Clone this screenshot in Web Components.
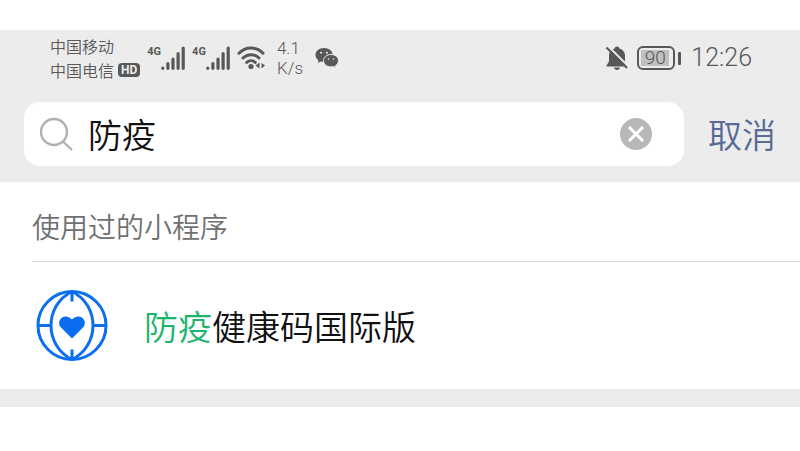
<!DOCTYPE html>
<html lang="zh-CN">
<head>
<meta charset="UTF-8">
<meta name="viewport" content="width=device-width, initial-scale=1">
<title>搜索</title>
<style>
    body {
        margin: 0;
        background: #fff;
        color: #111;
        font-family: "Noto Sans CJK SC", sans-serif;
        font-weight: 350;
    }
</style>
</head>
<body>
<search-page>
    <status-bar slot="status" speed="4.1" unit="K/s" battery="90" time="12:26">
        <span slot="carrier">中国移动</span>
        <span slot="carrier-hd">中国电信</span>
    </status-bar>
    <search-bar slot="search" value="防疫">取消</search-bar>
    <result-section>
        <span slot="title">使用过的小程序</span>
        <mini-program><mark-text>防疫</mark-text>健康码国际版</mini-program>
    </result-section>
</search-page>

<script>
class SearchPage extends HTMLElement {

    constructor() {
        super()
        this.shadow = this.attachShadow({ mode: 'open' })
    }

    connectedCallback() {
        this.render()
    }

    render() {
        this.shadow.innerHTML =
      /*html*/`
      <style>
        :host {
            display: block;
            padding-top: 30px;
        }

        header {
            background: #ececec;
            padding-bottom: 16px;
        }

        footer {
            height: 18px;
            background: #ebebeb;
        }
      </style>

      <header>
          <slot name="status"></slot>
          <slot name="search"></slot>
      </header>
      <main><slot></slot></main>
      <footer></footer>
      `
    }
}

class StatusBar extends HTMLElement {

    constructor() {
        super()
        this.shadow = this.attachShadow({ mode: 'open' })
    }

    connectedCallback() {
        this.render()
    }

    render() {
        this.shadow.innerHTML =
      /*html*/`
      <style>
        :host {
            display: flex;
            justify-content: space-between;
            align-items: center;
            height: 56px;
            padding: 0 48px 0 50px;
            margin-bottom: 16px;
            color: #585858;
        }

        .group {
            display: flex;
            align-items: center;
            gap: 7px;
        }

        .carriers {
            font-size: 16px;
            line-height: 24px;
        }

        .line {
            display: flex;
            align-items: center;
            gap: 4px;
        }

        .hd {
            padding: 0 3px;
            border-radius: 4px;
            background: #585858;
            color: #ececec;
            font: bold 12px/14px Roboto, sans-serif;
        }

        .speed {
            margin-left: 5px;
            font: 350 17px/20px Roboto, sans-serif;
        }

        .wechat {
            margin-left: 5px;
        }

        .battery {
            display: flex;
            align-items: center;
            gap: 3px;
        }

        .cell {
            box-sizing: border-box;
            width: 38px;
            padding: 2px;
            border: 2px solid #585858;
            border-radius: 6px;
        }

        .level {
            width: 28px;
            background: #c0c0c0;
            font: 350 19px/16px Roboto, sans-serif;
            text-align: center;
        }

        .nub {
            width: 3px;
            height: 13px;
            border-radius: 1px;
            background: #585858;
        }

        .time {
            margin-left: 3px;
            font: 350 25px/32px Roboto, sans-serif;
        }

        svg {
            display: block;
        }
      </style>

      <div class="group">
          <div class="carriers">
              <div class="line"><slot name="carrier"></slot></div>
              <div class="line"><slot name="carrier-hd"></slot><span class="hd">HD</span></div>
          </div>
          <signal-bars>4G</signal-bars>
          <signal-bars>4G</signal-bars>
          <svg width="28" height="26" viewBox="0 0 28 26" fill="none" stroke="#585858" stroke-width="3" stroke-linecap="round">
              <path d="M2 8.200C8.500 1.300 19.500 1.300 26 8.200"/>
              <path d="M6 13C10.500 8.500 17.500 8.500 22 13"/>
              <path d="M9.800 17.400C12.200 15.300 15.800 15.300 18.200 17.400"/>
              <circle cx="14" cy="21.500" r="2.600" fill="#585858" stroke="none"/>
              <path d="M18.500 20.500l4-3v6zM24.500 18l3.500 2.500-3.500 3z" fill="#585858" stroke="none"/>
          </svg>
          <div class="speed">${this.getAttribute('speed')}<br>${this.getAttribute('unit')}</div>
          <svg class="wechat" width="24" height="22" viewBox="0 0 24 22">
              <path d="M9 1C4 1 .500 4 .500 8c0 2.300 1.200 4.200 3 5.400L2.800 16l3-1.500c1 .300 2 .500 3.200.500 5 0 8.700-3 8.700-7S14 1 9 1z" fill="#585858"/>
              <path d="M16 7.500c-4.200 0-7.500 2.700-7.500 6.200s3.300 6.200 7.500 6.200c.900 0 1.800-.100 2.600-.400l2.600 1.400-.600-2.300c1.800-1.100 2.900-2.900 2.900-4.900 0-3.500-3.300-6.200-7.500-6.200z" fill="#585858" stroke="#ececec"/>
              <g fill="#ececec">
                  <circle cx="6" cy="5.800" r="1"/>
                  <circle cx="12" cy="5.800" r="1"/>
                  <circle cx="13.500" cy="12" r=".800"/>
                  <circle cx="18.500" cy="12" r=".800"/>
              </g>
          </svg>
      </div>

      <div class="group">
          <svg width="24" height="26" viewBox="0 0 24 26">
              <path d="M11 1.500c-1.300 0-2.200.800-2.400 1.900C5.300 4.500 3 7 3 10.500v6L.500 20.500v1h20.500v-1l-2-4v-6c0-3.500-2.300-6-5.600-7.100C13.200 2.300 12.300 1.500 11 1.500z" fill="#585858"/>
              <path d="M8 22.500h6c-.300 1.500-1.500 2.500-3 2.500s-2.700-1-3-2.500z" fill="#585858"/>
              <path d="M2 1L22.500 21.500" stroke="#ececec" stroke-width="2"/>
              <path d="M.500 2.500L21 23" stroke="#585858" stroke-width="2.200"/>
          </svg>
          <div class="battery">
              <div class="cell"><div class="level">${this.getAttribute('battery')}</div></div>
              <div class="nub"></div>
          </div>
          <time class="time">${this.getAttribute('time')}</time>
      </div>
      `
    }
}

class SignalBars extends HTMLElement {

    constructor() {
        super()
        this.shadow = this.attachShadow({ mode: 'open' })
    }

    connectedCallback() {
        this.render()
    }

    render() {
        this.shadow.innerHTML =
      /*html*/`
      <style>
        :host {
            display: flex;
            align-items: flex-start;
            color: #585858;
            font: bold 11px/11px Roboto, sans-serif;
        }

        svg {
            display: block;
        }
      </style>

      <slot></slot>
      <svg width="24" height="24" viewBox="0 0 24 24" stroke="#585858" stroke-width="3.200" stroke-linecap="round">
          <path d="M1.800 22v.300M6.900 17.600v4.700M12 13v9.300M17.100 7.500v14.800M22.200 2v20.300"/>
      </svg>
      `
    }
}

class SearchBar extends HTMLElement {

    constructor() {
        super()
        this.shadow = this.attachShadow({ mode: 'open' })
    }

    connectedCallback() {
        this.render()
    }

    render() {
        this.shadow.innerHTML =
      /*html*/`
      <style>
        :host {
            display: flex;
            align-items: center;
            gap: 24px;
            padding: 0 24px;
        }

        .box {
            display: flex;
            flex: 1;
            align-items: center;
            gap: 14px;
            min-width: 0;
            height: 64px;
            padding: 0 32px 0 16px;
            box-sizing: border-box;
            border-radius: 16px;
            background: #fff;
        }

        input {
            flex: 1;
            min-width: 0;
            padding: 0;
            border: 0;
            outline: 0;
            background: none;
            color: #111;
            font: inherit;
            font-size: 34px;
            line-height: 48px;
        }

        button {
            padding: 0;
            border: 0;
            background: none;
            font: inherit;
            cursor: pointer;
        }

        .cancel {
            color: #576b95;
            font-size: 34px;
            line-height: 48px;
        }

        svg {
            display: block;
            flex: none;
        }
      </style>

      <label class="box">
          <svg width="34" height="34" viewBox="0 0 34 34" fill="none" stroke="#b0b0b0" stroke-width="2.400">
              <circle cx="14" cy="15" r="13"/>
              <path d="M23 24.500L32 33"/>
          </svg>
          <input type="text" aria-label="搜索" value="${this.getAttribute('value')}">
          <button class="clear" type="button" aria-label="清除">
              <svg width="32" height="32" viewBox="0 0 32 32">
                  <circle cx="16" cy="16" r="16" fill="#b8b8b8"/>
                  <path d="M9 9l14 14M23 9L9 23" stroke="#fff" stroke-width="3"/>
              </svg>
          </button>
      </label>
      <button class="cancel" type="button"><slot></slot></button>
      `

        let input = this.shadow.querySelector('input');
        let clear = this.shadow.querySelector('.clear');

        clear.addEventListener('click', () => {
            input.value = '';
            input.focus();
        });
    }
}

class ResultSection extends HTMLElement {

    constructor() {
        super()
        this.shadow = this.attachShadow({ mode: 'open' })
    }

    connectedCallback() {
        this.render()
    }

    render() {
        this.shadow.innerHTML =
      /*html*/`
      <style>
        :host {
            display: block;
            padding-left: 32px;
        }

        h2 {
            margin: 0;
            padding: 24px 0 15px;
            border-bottom: 1px solid #d8d8d8;
            color: #707070;
            font-size: 28px;
            font-weight: inherit;
            line-height: 40px;
        }
      </style>

      <h2><slot name="title"></slot></h2>
      <slot></slot>
      `
    }
}

class MiniProgram extends HTMLElement {

    constructor() {
        super()
        this.shadow = this.attachShadow({ mode: 'open' })
    }

    connectedCallback() {
        this.render()
    }

    render() {
        this.shadow.innerHTML =
      /*html*/`
      <style>
        :host {
            display: block;
        }

        a {
            display: flex;
            align-items: center;
            gap: 36px;
            padding: 28px 4px 27px;
            color: #111;
            font-size: 34px;
            line-height: 48px;
            text-decoration: none;
        }

        svg {
            display: block;
            flex: none;
        }
      </style>

      <a href="#">
          <svg width="72" height="72" viewBox="0 0 72 72" fill="none" stroke="#0b6ef0" stroke-width="3">
              <circle cx="36" cy="35.500" r="34"/>
              <path d="M36 1.500C8 15.500 8 55.500 36 69.500M36 1.500C64 15.500 64 55.500 36 69.500"/>
              <path d="M2 35.500h13M57 35.500h13M36 1.500v10M36 59.500v10"/>
              <path d="M36 48.500L25 37.500C19 31 28.500 21.500 36 29.500C43.500 21.500 53 31 47 37.500Z" fill="#0b6ef0" stroke="none"/>
          </svg>
          <span><slot></slot></span>
      </a>
      `
    }
}

class MarkText extends HTMLElement {

    constructor() {
        super()
        this.shadow = this.attachShadow({ mode: 'open' })
    }

    connectedCallback() {
        this.shadow.innerHTML =
      /*html*/`
      <style>
        :host {
            color: #1bb46c;
        }
      </style>

      <slot></slot>`
    }
}

customElements.define('search-page', SearchPage);
customElements.define('status-bar', StatusBar);
customElements.define('signal-bars', SignalBars);
customElements.define('search-bar', SearchBar);
customElements.define('result-section', ResultSection);
customElements.define('mini-program', MiniProgram);
customElements.define('mark-text', MarkText);
</script>
</body>
</html>
